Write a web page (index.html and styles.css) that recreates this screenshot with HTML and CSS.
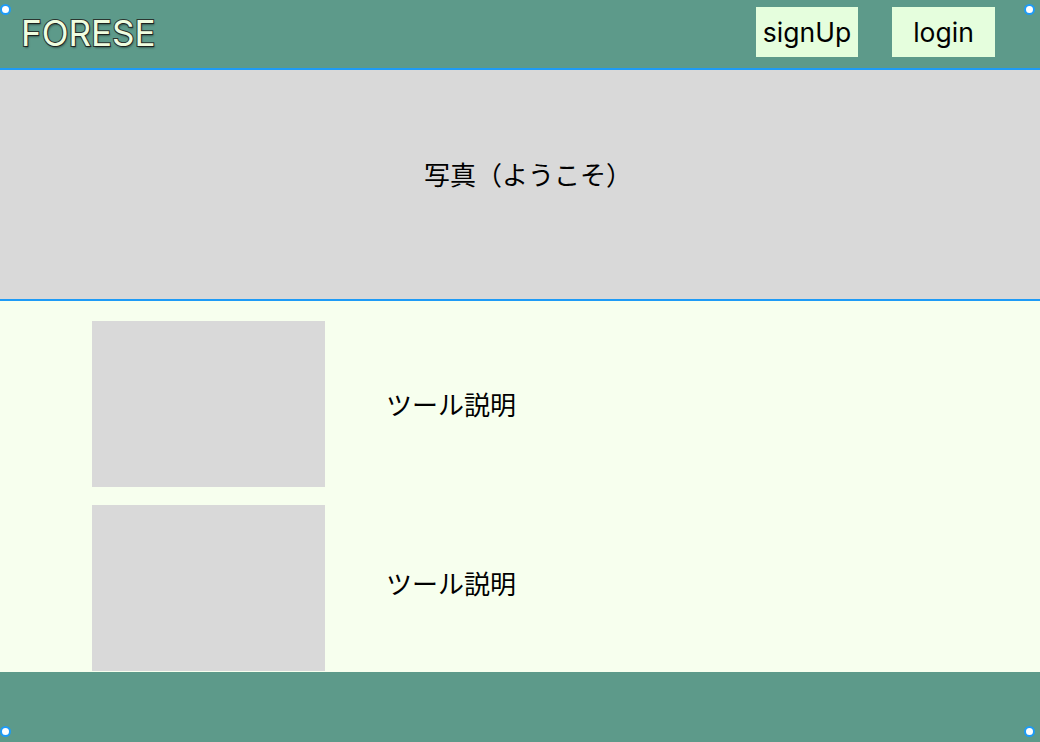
FILE: index.html
```html
<!DOCTYPE html>
<html lang="ja">
<head>
<meta charset="utf-8">
<title>FORESE</title>
<link rel="stylesheet" href="styles.css">
</head>
<body>
<div class="frame">
  <header class="header">
    <div class="logo">FORESE</div>
    <nav class="nav">
      <button class="btn">signUp</button>
      <button class="btn btn-login">login</button>
    </nav>
  </header>
  <section class="hero">写真（ようこそ）</section>
  <main class="content">
    <div class="tool">
      <div class="tool-img"></div>
      <p class="tool-text">ツール説明</p>
    </div>
    <div class="tool">
      <div class="tool-img"></div>
      <p class="tool-text tool-text-up">ツール説明</p>
    </div>
  </main>
  <footer class="footer"></footer>
  <span class="handle handle-tl"></span>
  <span class="handle handle-tr"></span>
  <span class="handle handle-bl"></span>
  <span class="handle handle-br"></span>
</div>
</body>
</html>
```

FILE: styles.css
```css
* { box-sizing: border-box; }
html, body { margin: 0; padding: 0; }
body {
  width: 1040px;
  height: 742px;
  overflow: hidden;
  font-family: "Noto Sans", "Noto Sans CJK JP", sans-serif;
  background: #f7ffee;
}
.frame {
  position: relative;
  width: 1040px;
  height: 742px;
  display: flex;
  flex-direction: column;
  overflow: hidden;
}
.header {
  height: 70px;
  flex: none;
  background: #5d9a8a;
  border-bottom: 2px solid #1e9bf6;
  display: flex;
  align-items: flex-start;
  justify-content: space-between;
  padding: 7px 45px 0 21px;
}
.logo {
  font-family: Inter, "Noto Sans", sans-serif;
  font-size: 35px;
  line-height: 1;
  margin-top: 9px;
  color: #effde0;
  -webkit-text-stroke: 2px #2b3530;
  paint-order: stroke fill;
  text-shadow: 1px 2px 2px rgba(0,0,0,0.4);
}
.nav {
  display: flex;
  gap: 34px;
}
.btn {
  font-family: Inter, "Noto Sans", sans-serif;
  width: 102px;
  height: 50px;
  border: none;
  background: #e5fedd;
  color: #000;
  font-size: 26.5px;
  padding: 0;
  margin: 0;
  display: flex;
  align-items: center;
  justify-content: center;
}
.btn-login { width: 103px; }
.hero {
  height: 231px;
  flex: none;
  background: #d9d9d9;
  border-bottom: 2px solid #1e9bf6;
  display: flex;
  align-items: center;
  justify-content: center;
  font-size: 26px;
  color: #000;
  padding: 0 0 22px 16px;
}
.content {
  flex: 1;
  background: #f7ffee;
  padding: 20px 0 0 92px;
  display: flex;
  flex-direction: column;
  gap: 18px;
  overflow: hidden;
}
.tool {
  display: flex;
  align-items: center;
  flex: none;
}
.tool-img {
  width: 233px;
  height: 166px;
  background: #d9d9d9;
}
.tool-text {
  margin: 0 0 0 61px;
  font-size: 26px;
  color: #000;
}
.tool-text-up { margin-bottom: 10px; }
.footer {
  height: 70px;
  flex: none;
  background: #5d9a8a;
}
.handle {
  position: absolute;
  width: 11px;
  height: 11px;
  border-radius: 50%;
  background: #fff;
  border: 2px solid #1e9bf6;
}
.handle-tl { left: 0; top: 4px; }
.handle-tr { left: 1024px; top: 4px; }
.handle-bl { left: 0; top: 726px; }
.handle-br { left: 1024px; top: 726px; }
```
